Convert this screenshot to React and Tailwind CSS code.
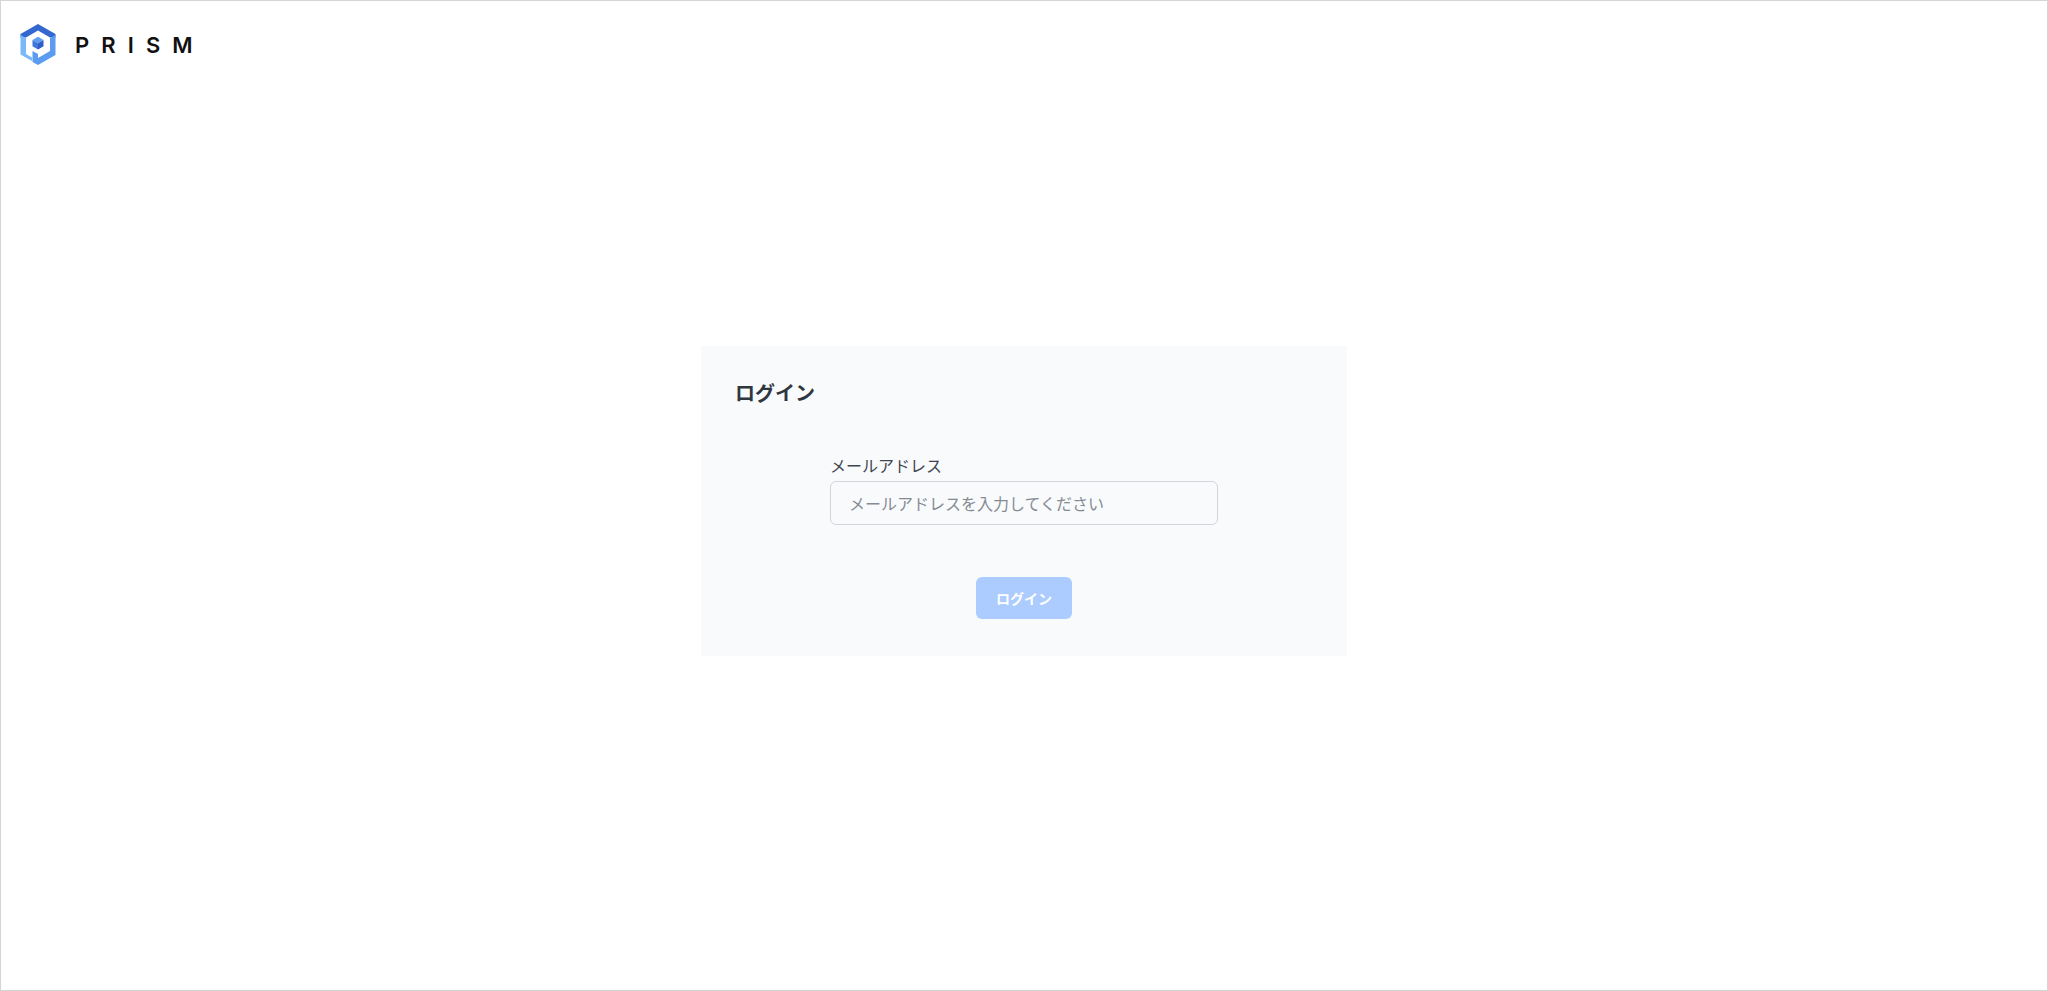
function PrismLogo() {
  return (
    <svg width="38" height="44" viewBox="0 0 38 44" className="block">
      {/* roof */}
      <path d="M19 1 L36.5 11 L36.5 14.5 L31 14.5 L19 7.5 L7 14.5 L1.5 14.5 L1.5 11 Z" fill="#3467cf" />
      {/* left wall */}
      <path d="M1.5 12 L7 15 L7 31 L13 34.5 L13 38 L1.5 31.5 Z" fill="#7ab8fa" />
      {/* right wall and stem */}
      <path d="M36.5 12 L31 15 L31 28 L19 35 L19 31 L13.5 28 L13.5 39 L19 42 L36.5 32 Z" fill="#5c9cf0" />
      {/* inner bowl */}
      <path d="M19 9.5 L29.5 15.5 L29.5 18 L25 15.8 L19 12.5 L13 15.8 L11.5 18 L8.5 18 L8.5 15.5 Z" fill="#ffffff" />
      {/* cube */}
      <path d="M19 13.8 L24.5 17 L19 20.2 L13.5 17 Z" fill="#5f9df0" />
      <path d="M13.5 17 L19 20.2 L19 26.5 L13.5 23.3 Z" fill="#3f78dc" />
      <path d="M24.5 17 L19 20.2 L19 26.5 L24.5 23.3 Z" fill="#2f5fc4" />
    </svg>
  );
}

function App() {
  return (
    <div className="h-[991px] overflow-hidden border border-[#d4d4d4] bg-white font-['Noto_Sans_CJK_JP','Noto_Sans',sans-serif] text-[#333a45]">
      {/* Header */}
      <header className="flex h-[88px] items-start pl-[18px] pt-[22px]">
        <PrismLogo />
        <span className="ml-[18px] mt-[6px] font-['Inter',sans-serif] text-[22px] font-semibold leading-[32px] tracking-[0.55em] text-[#111]">
          PRISM
        </span>
      </header>

      {/* Login card */}
      <main className="flex justify-center pt-[257px]">
        <div className="h-[310px] w-[646px] bg-[#f9fafb] px-[34px] pt-[32px]">
          <h1 className="text-[20px] font-bold leading-[30px] text-[#2f3640]">ログイン</h1>

          <div className="mx-auto mt-[45px] w-[388px]">
            <label className="block text-[16px] leading-[24px] text-[#3f4651]">メールアドレス</label>
            <input
              type="text"
              placeholder="メールアドレスを入力してください"
              className="mt-[4px] h-[44px] w-full rounded-md border border-[#d1d5db] bg-[#f9fafb] px-[18px] text-[16px] outline-none placeholder:text-[#858b94]"
            />
          </div>

          <div className="mt-[52px] flex justify-center">
            <button className="h-[42px] w-[96px] rounded-md bg-[#acccff] text-[14px] font-bold text-white">
              ログイン
            </button>
          </div>
        </div>
      </main>
    </div>
  );
}

export default App;
